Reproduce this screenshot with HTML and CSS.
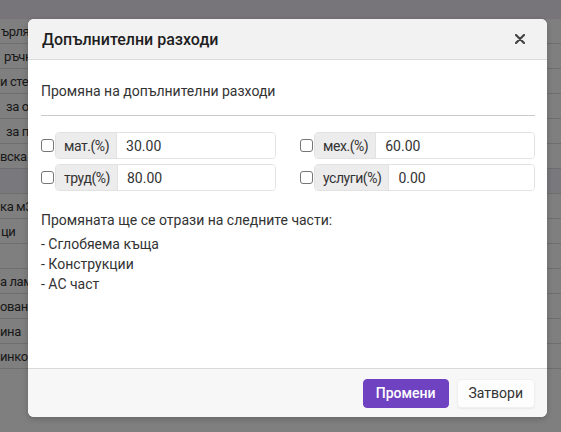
FILE: index.html
```html
<!DOCTYPE html>
<html lang="bg">
<head>
<meta charset="utf-8">
<title>Допълнителни разходи</title>
<link rel="stylesheet" href="styles.css">
</head>
<body>
<div class="page">
  <div class="topbar"></div>
  <div class="table">
    <div class="row"><span class="cell c1">ърля</span></div>
    <div class="row"><span class="cell c4">ръчн</span></div>
    <div class="row"><span class="cell">и сте</span></div>
    <div class="row"><span class="cell c6">за ос</span></div>
    <div class="row"><span class="cell c6">за пл</span></div>
    <div class="row"><span class="cell">вска - (</span></div>
    <div class="row row-group"><span class="cell"></span></div>
    <div class="row"><span class="cell">ка м3</span></div>
    <div class="row"><span class="cell c1">ци</span></div>
    <div class="row"><span class="cell"></span></div>
    <div class="row"><span class="cell">а лам</span></div>
    <div class="row"><span class="cell">ована</span></div>
    <div class="row"><span class="cell">ина</span></div>
    <div class="row"><span class="cell">инко</span></div>
  </div>
</div>
<div class="backdrop"></div>
<div class="modal">
  <div class="modal-header">
    <h5 class="modal-title">Допълнителни разходи</h5>
    <svg class="close" width="10" height="10" viewBox="0 0 10 10" aria-label="Затвори"><path d="M1 1L9 9M9 1L1 9" stroke="#444" stroke-width="2.2" stroke-linecap="round"/></svg>
  </div>
  <div class="modal-body">
    <p class="lead-text">Промяна на допълнителни разходи</p>
    <hr class="divider">
    <div class="fields">
      <div class="field">
        <input type="checkbox" class="check">
        <div class="group"><span class="addon">мат.(%)</span><span class="value">30.00</span></div>
      </div>
      <div class="field">
        <input type="checkbox" class="check">
        <div class="group"><span class="addon">мех.(%)</span><span class="value">60.00</span></div>
      </div>
      <div class="field">
        <input type="checkbox" class="check">
        <div class="group"><span class="addon">труд(%)</span><span class="value">80.00</span></div>
      </div>
      <div class="field">
        <input type="checkbox" class="check">
        <div class="group"><span class="addon">услуги(%)</span><span class="value">0.00</span></div>
      </div>
    </div>
    <p class="note">Промяната ще се отрази на следните части:</p>
    <div class="parts">
      <div>- Сглобяема къща</div>
      <div>- Конструкции</div>
      <div>- АС част</div>
    </div>
  </div>
  <div class="modal-footer">
    <button class="btn btn-primary">Промени</button>
    <button class="btn btn-light">Затвори</button>
  </div>
</div>
</body>
</html>
```

FILE: styles.css
```css
* { box-sizing: border-box; }
html, body {
  margin: 0;
  padding: 0;
  width: 561px;
  height: 432px;
  overflow: hidden;
  font-family: Roboto, "Open Sans", sans-serif;
  font-size: 14px;
  color: #333;
  background: #fff;
}
.page {
  width: 561px;
  height: 432px;
}
.topbar {
  height: 19px;
  background: #eeebf4;
}
.row {
  height: 25px;
  border-bottom: 1px solid #dcdcdc;
  display: flex;
  align-items: center;
  overflow: hidden;
  white-space: nowrap;
}
.row-group {
  background: #f3f0f8;
}
.cell {
  color: #333;
  font-size: 13px;
  letter-spacing: -0.4px;
}
.c1 { padding-left: 1px; }
.c4 { padding-left: 4px; }
.c6 { padding-left: 6px; }

.backdrop {
  position: absolute;
  inset: 0;
  background: rgba(0, 0, 0, 0.5);
}
.modal {
  position: absolute;
  left: 28px;
  top: 19px;
  width: 519px;
  height: 398px;
  background: #fff;
  border-radius: 6px;
  overflow: hidden;
  display: flex;
  flex-direction: column;
  box-shadow: 0 2px 6px rgba(0,0,0,0.2);
}
.modal-header {
  height: 41px;
  flex: none;
  background: #f2f2f2;
  border-bottom: 1px solid #dadada;
  display: flex;
  align-items: center;
  justify-content: space-between;
  padding: 0 22px 0 14px;
}
.modal-title {
  margin: 0;
  font-size: 16px;
  font-weight: 500;
  color: #1e1e1e;
}
.close {
  display: block;
}
.modal-body {
  flex: 1;
  padding: 21px 12px 0 13px;
}
.lead-text {
  margin: 0;
  line-height: 20px;
  color: #333;
}
.divider {
  margin: 14px 0 0;
  border: 0;
  border-top: 1px solid #c9c9c9;
  height: 0;
}
.fields {
  margin-top: 16px;
  display: grid;
  grid-template-columns: 1fr 1fr;
  column-gap: 24px;
  row-gap: 5px;
}
.field {
  display: flex;
  align-items: center;
  height: 27px;
}
.check {
  appearance: none;
  -webkit-appearance: none;
  margin: 0 1px 0 0;
  width: 13px;
  height: 13px;
  border: 1px solid #767676;
  border-radius: 3px;
  background: #fff;
  flex: none;
}
.group {
  flex: 1;
  display: flex;
  height: 27px;
  border: 1px solid #e2e2e2;
  border-radius: 4px;
  overflow: hidden;
}
.addon {
  display: flex;
  align-items: center;
  padding: 0 7px 0 8px;
  background: #ececec;
  border-right: 1px solid #e2e2e2;
  color: #333;
  font-size: 14px;
  letter-spacing: -0.45px;
}
.value {
  flex: 1;
  display: flex;
  align-items: center;
  padding: 0 9px;
  background: #fff;
  color: #333;
}
.note {
  margin: 19px 0 4px;
  line-height: 20px;
}
.parts div {
  line-height: 20px;
}
.modal-footer {
  flex: none;
  height: 49px;
  background: #f7f7f7;
  border-top: 1px solid #dadada;
  display: flex;
  align-items: center;
  justify-content: flex-end;
  gap: 8px;
  padding: 0 12px;
}
.btn {
  height: 29px;
  border-radius: 4px;
  font-family: Roboto, "Open Sans", sans-serif;
  font-size: 14px;
  padding: 0 11px;
  cursor: pointer;
}
.btn-primary {
  background: #6f42c1;
  border: 1px solid #6f42c1;
  color: #fff;
  font-weight: 500;
  padding: 0 12px;
}
.btn-light {
  background: #fdfdfd;
  border: 1px solid #f0f0f0;
  color: #333;
  box-shadow: 0 1px 2px rgba(0,0,0,0.06);
}
```
